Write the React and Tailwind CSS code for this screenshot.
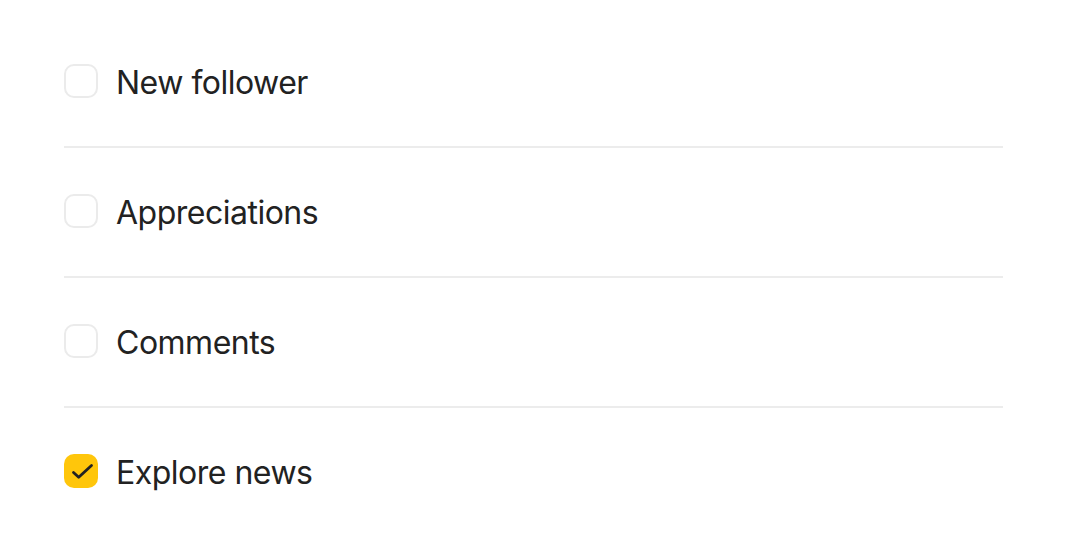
import React from "react";

const items = [
  { label: "New follower", checked: false },
  { label: "Appreciations", checked: false },
  { label: "Comments", checked: false },
  { label: "Explore news", checked: true },
];

function Box({ checked }) {
  if (checked) {
    return (
      <div className="w-[34px] h-[34px] rounded-[10px] bg-[#ffc60b] shrink-0">
        <svg width="34" height="34" viewBox="0 0 34 34" fill="none">
          <path d="M9.5 18.5 L14.7 23.3 L27.5 11.5" stroke="#222222" strokeWidth="2.8" strokeLinecap="round" strokeLinejoin="round" />
        </svg>
      </div>
    );
  }
  return <div className="w-[34px] h-[34px] rounded-[10px] border-2 border-[#ebebeb] bg-white shrink-0" />;
}

export default function App() {
  return (
    <div className="w-[1067px] h-[554px] bg-white px-16 pt-[18px]" style={{ fontFamily: "Inter, 'Noto Sans', sans-serif" }}>
      {items.map((it, i) => (
        <div
          key={it.label}
          className={`flex items-center gap-[18px] pt-[46px] pb-[48px] ${i < items.length - 1 ? "border-b-2 border-[#ececec]" : ""}`}
        >
          <Box checked={it.checked} />
          <span className="text-[32px] leading-[34px] translate-y-[2px] text-[#222222] tracking-[-0.5px]">{it.label}</span>
        </div>
      ))}
    </div>
  );
}
